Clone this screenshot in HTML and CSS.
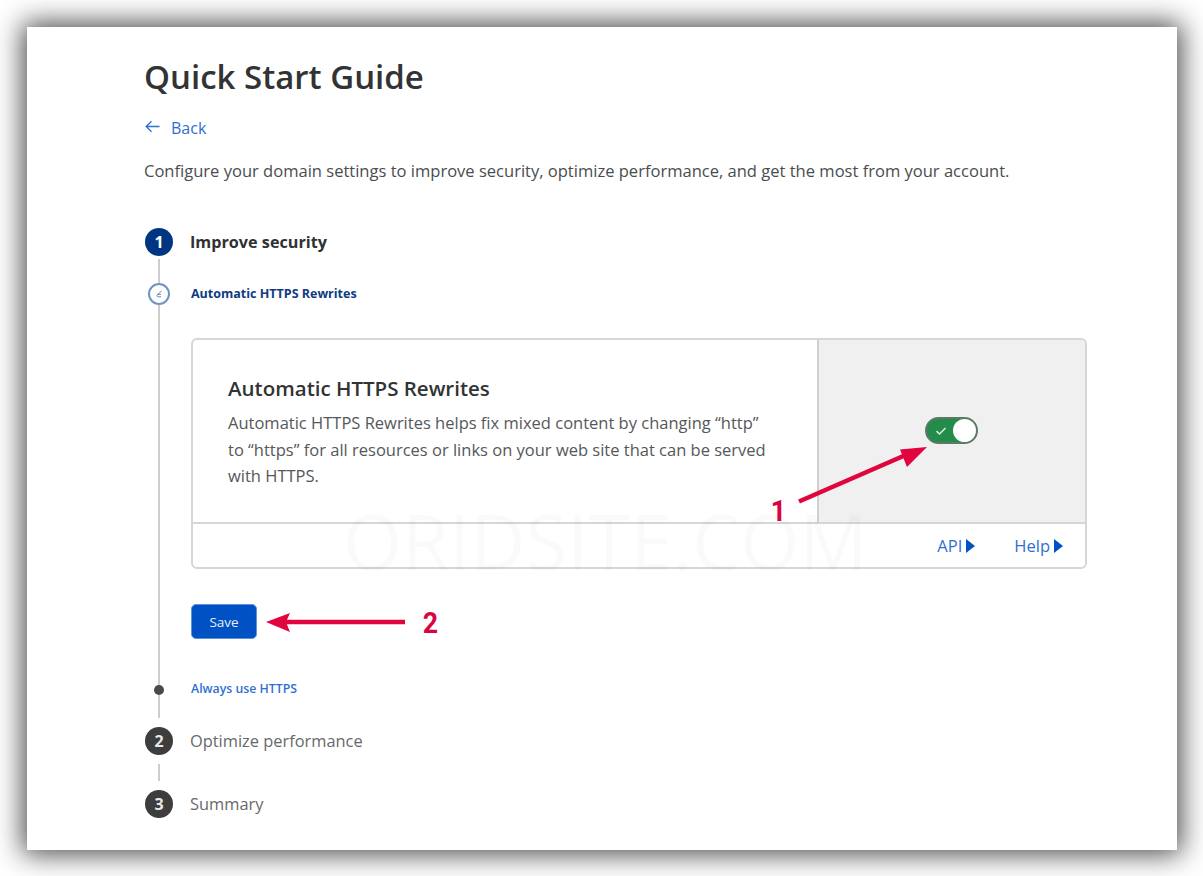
FILE: index.html
```html
<!DOCTYPE html>
<html lang="en">
<head>
<meta charset="utf-8">
<title>Quick Start Guide</title>
<link rel="stylesheet" href="styles.css">
</head>
<body>
<main class="sheet">
  <h1 class="title">Quick Start Guide</h1>
  <a class="back"><svg class="back-icon" width="15" height="13" viewBox="0 0 15 13"><path d="M14.5 6.5H1.5M6.5 1.2L1.2 6.5l5.3 5.3" fill="none" stroke="#2f6fd0" stroke-width="1.3"/></svg><span>Back</span></a>
  <p class="intro">Configure your domain settings to improve security, optimize performance, and get the most from your account.</p>

  <section class="steps">
    <div class="row row-step1">
      <div class="rail"><span class="num num-active">1</span></div>
      <h2 class="step-name step-active">Improve security</h2>
    </div>
    <div class="row row-sub">
      <div class="rail"><span class="line"></span><span class="ring"><svg width="12" height="12" viewBox="0 0 12 12"><path d="M8.5 3.2L4.4 6.6c-.9.9-.5 2.2.8 2.2h3M4.4 6.4h3.4" fill="none" stroke="#5f87bd" stroke-width="1"/></svg></span><span class="line"></span></div>
      <a class="sub-link sub-current">Automatic HTTPS Rewrites</a>
    </div>
    <div class="row row-body">
      <div class="rail"><span class="line"></span></div>
      <div class="body">
        <div class="card">
          <div class="card-main">
            <div class="card-text">
              <h3 class="card-title">Automatic HTTPS Rewrites</h3>
              <p class="card-desc">Automatic HTTPS Rewrites helps fix mixed content by changing “http” to “https” for all resources or links on your web site that can be served with HTTPS.</p>
            </div>
            <div class="card-side">
              <span class="toggle"><svg width="12" height="10" viewBox="0 0 12 10"><path d="M1.5 5.2l3 2.8 6-6" fill="none" stroke="#d6ebdc" stroke-width="1.6"/></svg><span class="knob"></span></span>
            </div>
          </div>
          <div class="card-foot">
            <a class="foot-link">API<span class="tri"></span></a>
            <a class="foot-link">Help<span class="tri"></span></a>
          </div>
        </div>
        <button class="save">Save</button>
      </div>
    </div>
    <div class="row row-sub2">
      <div class="rail"><span class="line"></span><span class="dot"></span><span class="line"></span></div>
      <a class="sub-link">Always use HTTPS</a>
    </div>
    <div class="row row-step">
      <div class="rail"><span class="num">2</span></div>
      <h2 class="step-name">Optimize performance</h2>
    </div>
    <div class="row row-gap">
      <div class="rail"><span class="line"></span></div>
    </div>
    <div class="row row-step">
      <div class="rail"><span class="num">3</span></div>
      <h2 class="step-name">Summary</h2>
    </div>
  </section>

  <div class="watermark">ORIDSITE.COM</div>
  <svg class="marks" width="1150" height="823" viewBox="27 27 1150 823">
    <path d="M799 501.500L908 454" fill="none" stroke="#e0043f" stroke-width="4.500"/>
    <path d="M927 447L900 449.500L907 467z" fill="#e0043f"/>
    <path d="M405 622H284" fill="none" stroke="#e0043f" stroke-width="4.500"/>
    <path d="M266 622L290 613L286 622L290 632z" fill="#e0043f"/>
  </svg>
  <span class="mark-num mark-1">1</span>
  <span class="mark-num mark-2">2</span>
</main>
</body>
</html>
```

FILE: styles.css
```css
* { box-sizing: border-box; }
html, body { margin: 0; height: 100%; }
body {
  background: #fff;
  padding: 27px 26px 26px 27px;
  font-family: "Open Sans", "Noto Sans", sans-serif;
  color: #36393a;
  overflow: hidden;
}
.sheet {
  position: relative;
  width: 1150px;
  height: 823px;
  background: #fff;
  padding: 28px 0 0 118px;
  box-shadow: 0 0 26px 4px rgba(0, 0, 0, .72);
}
.title {
  margin: 0 0 0 -1px;
  font-size: 33px;
  line-height: 44px;
  font-weight: 600;
  color: #313335;
}
.back {
  display: flex;
  align-items: center;
  gap: 11px;
  margin-top: 17px;
  height: 24px;
  font-size: 16px;
  color: #2f6fd0;
}
.back-icon { margin-top: -4px; }
.intro {
  margin: 19px 0 0 -1px;
  font-size: 16.55px;
  line-height: 24px;
  color: #4a4d4f;
}
.steps { margin-top: 45px; }
.row { display: flex; gap: 18px; }
.rail {
  flex: none;
  width: 28px;
  display: flex;
  flex-direction: column;
  align-items: center;
}
.line { flex: 1; width: 2px; margin-right: 1px; background: #cdcdcd; }
.num {
  flex: none;
  width: 28px;
  height: 28px;
  border-radius: 50%;
  background: #3d3d3d;
  color: #e8e8e8;
  display: flex;
  align-items: center;
  justify-content: center;
  font-size: 16px;
  font-weight: 700;
}
.num-active { background: #003681; color: #fff; }
.step-name {
  margin: 0 0 0 -1px;
  font-size: 16.4px;
  line-height: 28px;
  font-weight: 400;
  color: #66696b;
}
.step-active { font-size: 16.2px; font-weight: 700; color: #2f3133; }
.row-step1 { height: 30px; }
.row-sub { height: 80px; }
.row-sub .rail { padding-top: 1px; }
.ring {
  flex: none;
  width: 22px;
  height: 22px;
  border-radius: 50%;
  border: 2px solid #6f94c4;
  background: #fff;
  display: flex;
  align-items: center;
  justify-content: center;
}
.row-sub .line:first-child { flex: none; height: 24px; }
.sub-link {
  font-size: 12.3px;
  font-weight: 600;
  color: #2f6fd0;
}
.sub-current { font-size: 12.5px; color: #0f3b82; font-weight: 700; margin-top: 27px; line-height: 18px; }
.row-body { height: 342px; }
.body { flex: 1; padding-right: 91px; }
.card {
  width: 896px;
  height: 231px;
  border: 2px solid #d6d6d6;
  border-radius: 6px;
  overflow: hidden;
  background: #fff;
}
.card-main { display: flex; height: 184px; border-bottom: 2px solid #d6d6d6; }
.card-text { width: 624px; padding: 34px 40px 0 35px; }
.card-title {
  margin: 0;
  font-size: 20.5px;
  line-height: 28px;
  font-weight: 600;
  color: #313335;
}
.card-desc {
  margin: 8px 0 0;
  font-size: 16.5px;
  line-height: 26.5px;
  color: #55585a;
}
.card-side {
  flex: 1;
  background: #f0f0f0;
  border-left: 2px solid #d0d0d0;
  display: flex;
  justify-content: center;
  padding: 77px 2px 0 0;
}
.toggle {
  width: 53px;
  height: 27px;
  border-radius: 14px;
  background: #238c4a;
  border: 2px solid #5a7a66;
  display: flex;
  align-items: center;
  padding-left: 8px;
  position: relative;
}
.knob {
  position: absolute;
  right: 0;
  top: 0;
  width: 23px;
  height: 23px;
  border-radius: 50%;
  background: #fff;
}
.card-foot {
  display: flex;
  justify-content: flex-end;
  align-items: center;
  gap: 39px;
  height: 43px;
  padding-right: 22px;
}
.foot-link {
  display: flex;
  align-items: center;
  gap: 4px;
  font-size: 16.5px;
  color: #2f6fd0;
}
.tri {
  width: 0;
  height: 0;
  border-left: 9px solid #0051c3;
  border-top: 7px solid transparent;
  border-bottom: 7px solid transparent;
}
.save {
  display: block;
  margin-top: 35px;
  width: 66px;
  height: 35px;
  border: 1px solid #5f93dc;
  border-radius: 5px;
  background: #0051c3;
  color: #e6eefa;
  font: 400 13.5px "Open Sans", sans-serif;
}
.row-sub2 { height: 47px; }
.row-sub2 .sub-link { line-height: 18px; }
.row-sub2 .line:first-child { flex: none; height: 5px; }
.dot { flex: none; width: 10px; height: 10px; margin-right: 1px; border-radius: 50%; background: #4a4a4a; }
.row-sub2 .rail { height: 38px; }
.row-step { height: 28px; }
.row-gap { height: 35px; padding: 9px 0; }
.watermark {
  position: absolute;
  left: 316px;
  top: 474px;
  font-size: 76px;
  line-height: 80px;
  color: rgba(0, 0, 0, .018);
  white-space: nowrap;
}
.marks { position: absolute; left: 0; top: 0; pointer-events: none; }
.mark-num {
  position: absolute;
  font-family: "Liberation Sans Narrow", "Roboto", sans-serif;
  font-size: 29px;
  line-height: 32px;
  font-weight: 700;
  color: #d9043f;
  transform: scaleX(.92);
}
.mark-1 { left: 743px; top: 468px; }
.mark-2 { left: 395px; top: 580px; }
```
